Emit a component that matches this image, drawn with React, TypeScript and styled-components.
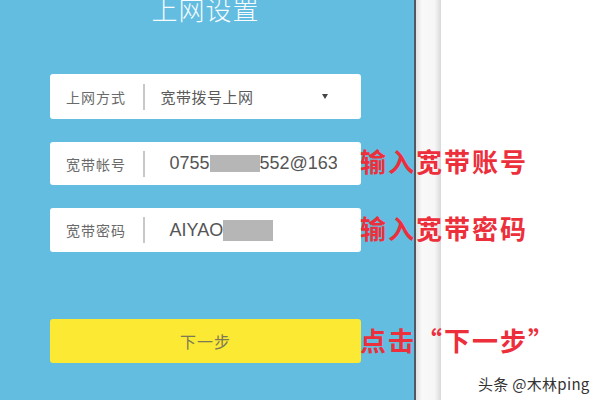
import React from "react";
import styled, { createGlobalStyle } from "styled-components";

const Global = createGlobalStyle`
  html, body { margin: 0; padding: 0; background: #fff; }
  body { font-family: "Noto Sans CJK SC", "Noto Sans", sans-serif; }
`;

const CJK = `"Noto Sans CJK SC", "Noto Sans", sans-serif`;

const Page = styled.div`
  position: relative;
  width: 600px;
  height: 400px;
  overflow: hidden;
  display: flex;
  background: #fff;
`;

const Panel = styled.div`
  width: 414px;
  flex: none;
  background: #63bde0;
  display: flex;
  flex-direction: column;
  padding-left: 50px;
  box-sizing: border-box;
`;

const Divider = styled.div`
  width: 2px;
  flex: none;
  background: #505861;
`;

const Strip = styled.div`
  width: 25px;
  flex: none;
  background: linear-gradient(to right, #e2e2e2, #f9f9f9 25%, #f6f6f6 75%, #d9d9d9);
`;

const WhiteArea = styled.div`
  flex: 1;
  display: flex;
  flex-direction: column;
  justify-content: flex-end;
  padding: 0 0 6px 37px;
`;

const Title = styled.div`
  width: 311px;
  margin-top: -4px;
  text-align: center;
  color: #fff;
  font-family: ${CJK};
  font-weight: 300;
  font-size: 26px;
  line-height: 26px;
  letter-spacing: 1px;
  opacity: 0.95;
`;

const Field = styled.div<{ $top: number; $h?: number; $pr?: number }>`
  width: 311px;
  height: ${(p) => p.$h ?? 44}px;
  margin-top: ${(p) => p.$top}px;
  background: #fff;
  border-radius: 3px;
  display: flex;
  align-items: center;
  box-sizing: border-box;
  padding-left: 16px;
  padding-right: ${(p) => p.$pr ?? 24}px;
  overflow: hidden;
`;

const Label = styled.span`
  width: 77px;
  flex: none;
  font-family: ${CJK};
  font-size: 14px;
  letter-spacing: 1px;
  color: #6a6a6a;
`;

const Sep = styled.span`
  width: 1.5px;
  height: 26px;
  flex: none;
  background: #c8c8c8;
`;

const Value = styled.div<{ $indent: number }>`
  flex: 1;
  min-width: 0;
  padding-left: ${(p) => p.$indent}px;
  display: flex;
  align-items: center;
  white-space: nowrap;
  overflow: hidden;
  color: #555;
`;

const CnValue = styled.span`
  font-family: ${CJK};
  font-size: 15px;
  letter-spacing: 0.5px;
  color: #5a5a5a;
`;

const LatinValue = styled.span`
  font-family: "Liberation Sans", Arial, sans-serif;
  font-size: 18px;
  color: #555;
`;

const Mask = styled.span<{ $w: number; $h: number }>`
  display: inline-block;
  width: ${(p) => p.$w}px;
  height: ${(p) => p.$h}px;
  background: #b6b6b6;
  flex: none;
`;

const Caret = styled.span`
  width: 0;
  height: 0;
  flex: none;
  border-left: 3.5px solid transparent;
  border-right: 3.5px solid transparent;
  border-top: 5px solid #444;
`;

const NextButton = styled.div`
  width: 311px;
  height: 44px;
  margin-top: 67px;
  background: #fbe934;
  border-radius: 3px;
  display: flex;
  align-items: center;
  justify-content: center;
  font-family: ${CJK};
  font-size: 16px;
  color: #7b7a55;
  letter-spacing: 1px;
`;

const Note = styled.div<{ $top: number }>`
  position: absolute;
  left: 360px;
  top: ${(p) => p.$top}px;
  font-family: ${CJK};
  font-weight: 700;
  font-size: 26px;
  line-height: 26px;
  letter-spacing: 2px;
  color: #ec2f3b;
  white-space: nowrap;
`;

const Watermark = styled.div`
  font-family: ${CJK};
  font-size: 15px;
  line-height: 20px;
  color: #333;
  letter-spacing: 0.3px;
`;

export default function App() {
  return (
    <>
      <Global />
      <Page>
        <Panel>
          <Title>上网设置</Title>
          <Field $top={52} $h={45} $pr={33}>
            <Label>上网方式</Label>
            <Sep />
            <Value $indent={16}>
              <CnValue>宽带拨号上网</CnValue>
            </Value>
            <Caret />
          </Field>
          <Field $top={23} $h={43}>
            <Label>宽带帐号</Label>
            <Sep />
            <Value $indent={25}>
              <LatinValue>0755</LatinValue>
              <Mask $w={50} $h={17} />
              <LatinValue>552@163.com</LatinValue>
            </Value>
          </Field>
          <Field $top={23} $h={44}>
            <Label>宽带密码</Label>
            <Sep />
            <Value $indent={25}>
              <LatinValue>AIYAO</LatinValue>
              <Mask $w={50} $h={21} />
            </Value>
          </Field>
          <NextButton>下一步</NextButton>
        </Panel>
        <Divider />
        <Strip />
        <WhiteArea>
          <Watermark>头条 @木林ping</Watermark>
        </WhiteArea>
        <Note $top={148}>输入宽带账号</Note>
        <Note $top={215}>输入宽带密码</Note>
        <Note $top={327}>点击“下一步”</Note>
      </Page>
    </>
  );
}
